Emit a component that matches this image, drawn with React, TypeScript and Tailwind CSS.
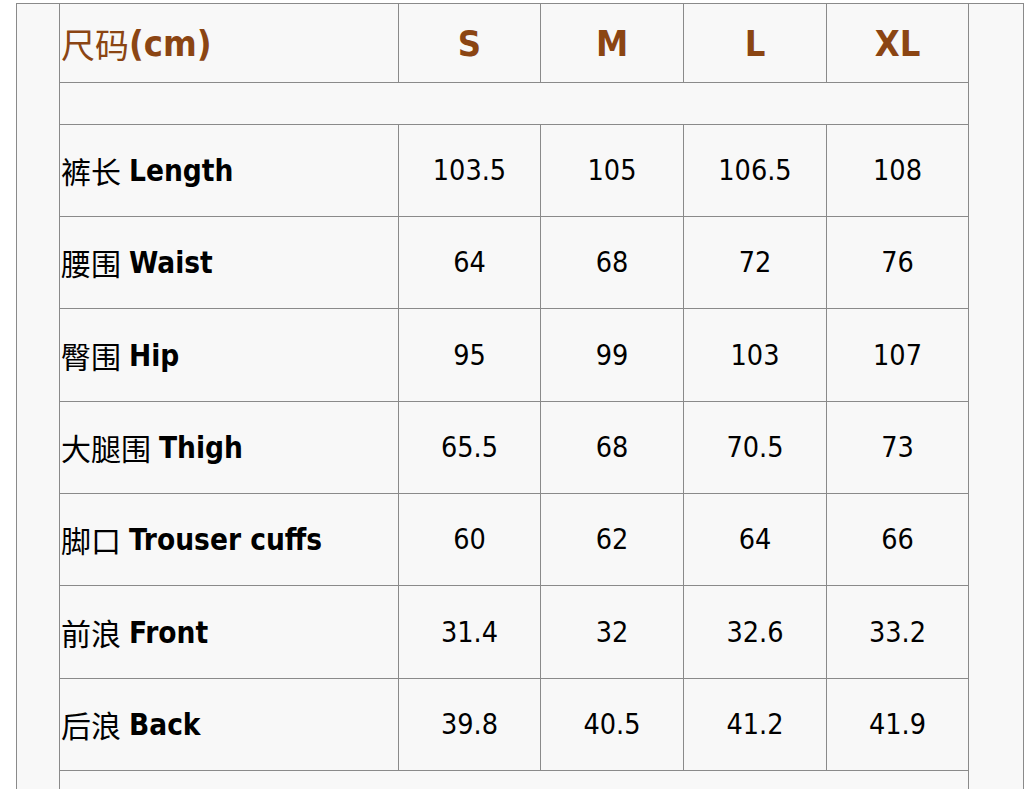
import React from "react";

const rows: { zh: string; en: string; v: string[]; h: string }[] = [
  { zh: "裤长", en: "Length", v: ["103.5", "105", "106.5", "108"], h: "h-[92px]" },
  { zh: "腰围", en: "Waist", v: ["64", "68", "72", "76"], h: "h-[92px]" },
  { zh: "臀围", en: "Hip", v: ["95", "99", "103", "107"], h: "h-[93px]" },
  { zh: "大腿围", en: "Thigh", v: ["65.5", "68", "70.5", "73"], h: "h-[92px]" },
  { zh: "脚口", en: "Trouser cuffs", v: ["60", "62", "64", "66"], h: "h-[92px]" },
  { zh: "前浪", en: "Front", v: ["31.4", "32", "32.6", "33.2"], h: "h-[93px]" },
  { zh: "后浪", en: "Back", v: ["39.8", "40.5", "41.2", "41.9"], h: "h-[92px]" },
];

const font = "font-['DejaVu_Sans_Condensed','DejaVu_Sans','Noto_Sans_CJK_SC',sans-serif]";
const cjk = "font-['Noto_Sans_CJK_SC',sans-serif]";
const cell = "border-r border-b border-[#8a8a8a] flex items-center";

export default function App() {
  return (
    <div className="w-[1028px] h-[789px] bg-white overflow-hidden pt-[3px] pl-[16px]">
      <div className={`w-[1008px] h-[800px] bg-[#f8f8f8] border-l border-r border-t border-[#8a8a8a] pl-[42px] ${font}`}>
        <div className="-mt-px w-[910px] grid grid-cols-[339px_142px_143px_143px_142px] border-l border-t border-[#8a8a8a]">
          <div className={`${cell} h-[79px] pl-[1px] pt-[2px] text-[36px] text-[#8b4513]`}>
            <span className={`${cjk} text-[34px] -mt-[2px]`}>尺码</span>
            <span className="font-bold">(cm)</span>
          </div>
          {["S", "M", "L", "XL"].map((s) => (
            <div key={s} className={`${cell} h-[79px] pt-[2px] justify-center text-[36px] font-bold text-[#8b4513]`}>
              {s}
            </div>
          ))}
          <div className={`${cell} col-span-5 h-[42px]`} />
          {rows.map((r) => (
            <React.Fragment key={r.en}>
              <div className={`${cell} ${r.h} pl-[1px] pt-[2px] text-[29.5px] text-black`}>
                <span className={`${cjk} text-[30px] font-normal -mt-[2px]`}>{r.zh}</span>
                <span className="font-bold ml-[8px]">{r.en}</span>
              </div>
              {r.v.map((x, i) => (
                <div key={i} className={`${cell} ${r.h} pt-[2px] justify-center text-[28.5px] text-black`}>
                  {x}
                </div>
              ))}
            </React.Fragment>
          ))}
          <div className={`${cell} col-span-5 h-[92px]`} />
        </div>
      </div>
    </div>
  );
}
